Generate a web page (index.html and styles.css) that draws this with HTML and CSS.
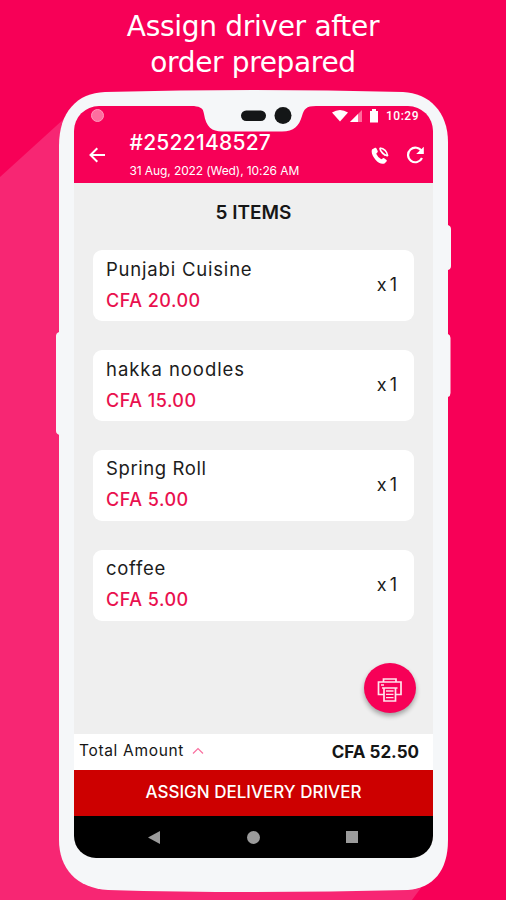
FILE: index.html
```html
<!DOCTYPE html>
<html lang="en">
<head>
<meta charset="utf-8">
<title>Assign driver</title>
<link rel="stylesheet" href="styles.css">
</head>
<body>
<main class="promo">
  <svg class="backdrop" viewBox="0 0 506 900" aria-hidden="true">
    <path d="M0 177L66 117L440 862L412 900H0Z" fill="#f72673"/>
    <path d="M60 332h-1q-3 1-3 4v95q0 3 4 4zM447 225h1q3 1 3 4v37q0 3-3 4h-1zM447 334h1q2.500 1 2.500 4v55q0 3-2.500 4h-1z" fill="#f5f7f9"/>
    <path d="M105 92Q180 90 254 90T403 92C429 93 448 112 448 142V840C448 871 433 888 408 890Q330 892 254 892T108 890C76 888 59 868 59 840V146C59 112 77 93 105 92Z" fill="#f5f7f9"/>
  </svg>
  <h1 class="headline"><span class="h-one">Assign driver after</span><br><span class="h-two">order prepared</span></h1>
  <section class="screen">
    <header class="top">
      <svg class="notch" viewBox="0 0 122 27" aria-hidden="true">
        <path d="M0 0C7 1 9 2 10 8C12 21 18 25.500 28 25.500H88C100 25.500 105 20 108 10C110 3 112 0 122 0Z" fill="#f5f7f9"/>
        <rect x="47" y="4.500" width="25" height="10.500" rx="5.200" fill="#141617"/>
        <circle cx="89" cy="9.500" r="8.500" fill="#141617"/>
      </svg>
      <div class="status">
        <i class="bubble"></i>
        <div class="status-right">
          <svg width="48" height="14" viewBox="0 0 48 14">
            <path d="M1 3.500Q9-1.500 17 3.500L9 12.500Z" fill="#fff"/>
            <path d="M19 13L31 1V13Z" fill="#ff6c9c"/><path d="M19 13L27 5V13Z" fill="#fff"/>
            <path d="M39 2h2V0h4v2h2v11.500h-8Z" fill="#fff"/>
          </svg>
          <span class="clock">10:29</span>
        </div>
      </div>
      <div class="bar">
        <svg class="back" width="17" height="16" viewBox="0 0 17 16"><path d="M16 8H1.500M8.300 1.200L1.500 8L8.300 14.800" fill="none" stroke="#fff" stroke-width="2"/></svg>
        <div class="order">
          <div class="number">#2522148527</div>
          <div class="date">31 Aug, 2022 (Wed), 10:26 AM</div>
        </div>
        <svg class="call" width="18" height="18" viewBox="0 0 18 18">
          <path d="M1 2.500L4 .8Q5 .4 5.500 1.400L6.700 4Q7 4.900 6.300 5.500L5.200 6.700Q6.500 10 10.300 12.200L12 11.200Q12.800 10.800 13.500 11.400L15.500 13.100Q16.100 13.800 15.500 14.500L13.500 16.500Q9 18 4.300 12.500T1 2.500Z" fill="#fff"/>
          <path d="M8.700 1Q15.500 1.800 16.800 9M8.700 1Q10 7 16.800 9M9.500 3.500L14 8.500" fill="none" stroke="#fff" stroke-width="1.500"/>
        </svg>
        <svg class="reload" width="20" height="18" viewBox="0 0 20 18"><path d="M16.700 5.300A7.300 7.300 0 1 0 17 12" fill="none" stroke="#fff" stroke-width="2.200"/><path d="M18.800 .8V8H11.200Z" fill="#fff"/></svg>
      </div>
    </header>
    <div class="content">
      <h2 class="count">5 ITEMS</h2>
      <div class="items">
        <article class="card"><div><div class="name n1">Punjabi Cuisine</div><div class="price">CFA 20.00</div></div><span class="qty">x 1</span></article>
        <article class="card"><div><div class="name n2">hakka noodles</div><div class="price">CFA 15.00</div></div><span class="qty">x 1</span></article>
        <article class="card"><div><div class="name n3">Spring Roll</div><div class="price">CFA 5.00</div></div><span class="qty">x 1</span></article>
        <article class="card"><div><div class="name n4">coffee</div><div class="price">CFA 5.00</div></div><span class="qty">x 1</span></article>
      </div>
      <div class="print">
        <svg width="26" height="26" viewBox="0 0 26 26" fill="none" stroke="#ffe3ec" stroke-width="1.700">
          <path d="M6.500 4.500V2H19V4.500M7 17.500H1.500V5H24V17.500H18.500M5 11H20.500M7 11V24H18.500V11M4 8H7"/>
          <path d="M9 14H16.500M9 17.300H16.500M9 20.600H16.500" stroke-width="1.300"/>
        </svg>
      </div>
    </div>
    <div class="total">
      <span class="total-label">Total Amount</span>
      <svg class="caret" width="12" height="8" viewBox="0 0 12 8"><path d="M1 6.500L6 1.500L11 6.500" fill="none" stroke="#f96f9f" stroke-width="1.200"/></svg>
      <strong class="sum">CFA 52.50</strong>
    </div>
    <div class="assign"><span>ASSIGN DELIVERY DRIVER</span></div>
    <nav class="nav">
      <svg width="12" height="13" viewBox="0 0 12 13"><path d="M12 0V13L0 6.500Z" fill="#9b9b9b"/></svg>
      <svg width="13" height="13" viewBox="0 0 13 13"><circle cx="6.500" cy="6.500" r="6.500" fill="#9b9b9b"/></svg>
      <svg width="12" height="12" viewBox="0 0 12 12"><path d="M0 0H12V12H0Z" fill="#9b9b9b"/></svg>
    </nav>
  </section>
</main>
</body>
</html>
```
FILE: styles.css
```css
* { box-sizing: border-box; }
body { margin: 0; font-family: Inter, "Open Sans", sans-serif; }
svg { display: block; flex: none; }
.promo { position: relative; width: 506px; height: 900px; overflow: hidden; background: #f70057; }
.backdrop { position: absolute; inset: 0; width: 506px; height: 900px; }
.headline { position: relative; height: 106px; margin: 0; padding-top: 9px; text-align: center; font: 400 28px/36px "DejaVu Sans", sans-serif; color: #fff; white-space: nowrap; }
.h-one { letter-spacing: -.3px; }
.h-two { letter-spacing: -.35px; }
.screen { position: relative; display: flex; flex-direction: column; width: 359px; height: 752px; margin-left: 74px; border-radius: 25px 25px 22px 22px; overflow: hidden; background: #efefef; }
.top { position: relative; height: 77px; background: #f70057; color: #fff; }
.notch { position: absolute; left: 120px; top: 0; width: 122px; height: 27px; }
.status { display: flex; justify-content: space-between; height: 21px; padding: 3px 14px 0 17px; }
.bubble { width: 13px; height: 13px; border-radius: 50%; background: #fd6e9f; border: 1px solid #ff9abd; }
.status-right { display: flex; gap: 7px; }
.clock { font: 500 12px/14px Roboto, sans-serif; letter-spacing: .5px; }
.bar { display: flex; height: 56px; }
.back { margin: 20px 0 0 15px; }
.order { width: 200px; margin-left: 23.500px; white-space: nowrap; }
.number { height: 30px; font-size: 21px; line-height: 31px; font-weight: 500; letter-spacing: .25px; }
.date { font-size: 12px; line-height: 28px; letter-spacing: -.1px; }
.call { margin: 20px 0 0 41.500px; }
.reload { margin: 19px 0 0 16px; }
.content { position: relative; height: 551px; }
.count { margin: 0; padding-top: 15px; font-size: 19px; line-height: 29px; font-weight: 600; text-align: center; color: #161616; }
.items { display: flex; flex-direction: column; gap: 28.500px; padding: 23px 19px 0 18.500px; }
.card { display: flex; justify-content: space-between; align-items: center; height: 71.400px; padding: 0 17px 0 13.500px; border-radius: 9px; background: #fff; color: #1c1c1c; white-space: nowrap; }
.name { height: 31px; font-size: 18.500px; line-height: 29px; letter-spacing: .8px; }
.n2 { letter-spacing: .95px; }
.n3 { letter-spacing: .6px; }
.n4 { letter-spacing: .7px; }
.price { font-size: 18px; line-height: 29px; height: 31px; font-weight: 500; letter-spacing: .5px; color: #e9104e; }
.qty { padding-bottom: 2px; font-size: 18px; word-spacing: -2px; }
.print { position: absolute; right: 17.500px; top: 480px; display: flex; align-items: center; justify-content: center; width: 52px; height: 50px; padding-top: 3px; border-radius: 50%; background: #f70057; box-shadow: 0 3px 5px #0005; }
.total { display: flex; align-items: center; height: 36px; padding: 0 14px 0 5px; background: #fff; color: #151515; }
.total-label { margin-right: 8px; padding-bottom: 3px; font-size: 15.500px; letter-spacing: .67px; }
.caret { margin-bottom: 3px; }
.sum { margin-left: auto; font-size: 17px; font-weight: 700; }
.assign { display: flex; align-items: center; justify-content: center; height: 46px; padding-bottom: 3px; background: #cd0000; color: #fff; font-size: 17px; font-weight: 500; }
.nav { display: flex; align-items: center; gap: 86.500px; height: 42px; padding-left: 74px; background: #000; }
```
